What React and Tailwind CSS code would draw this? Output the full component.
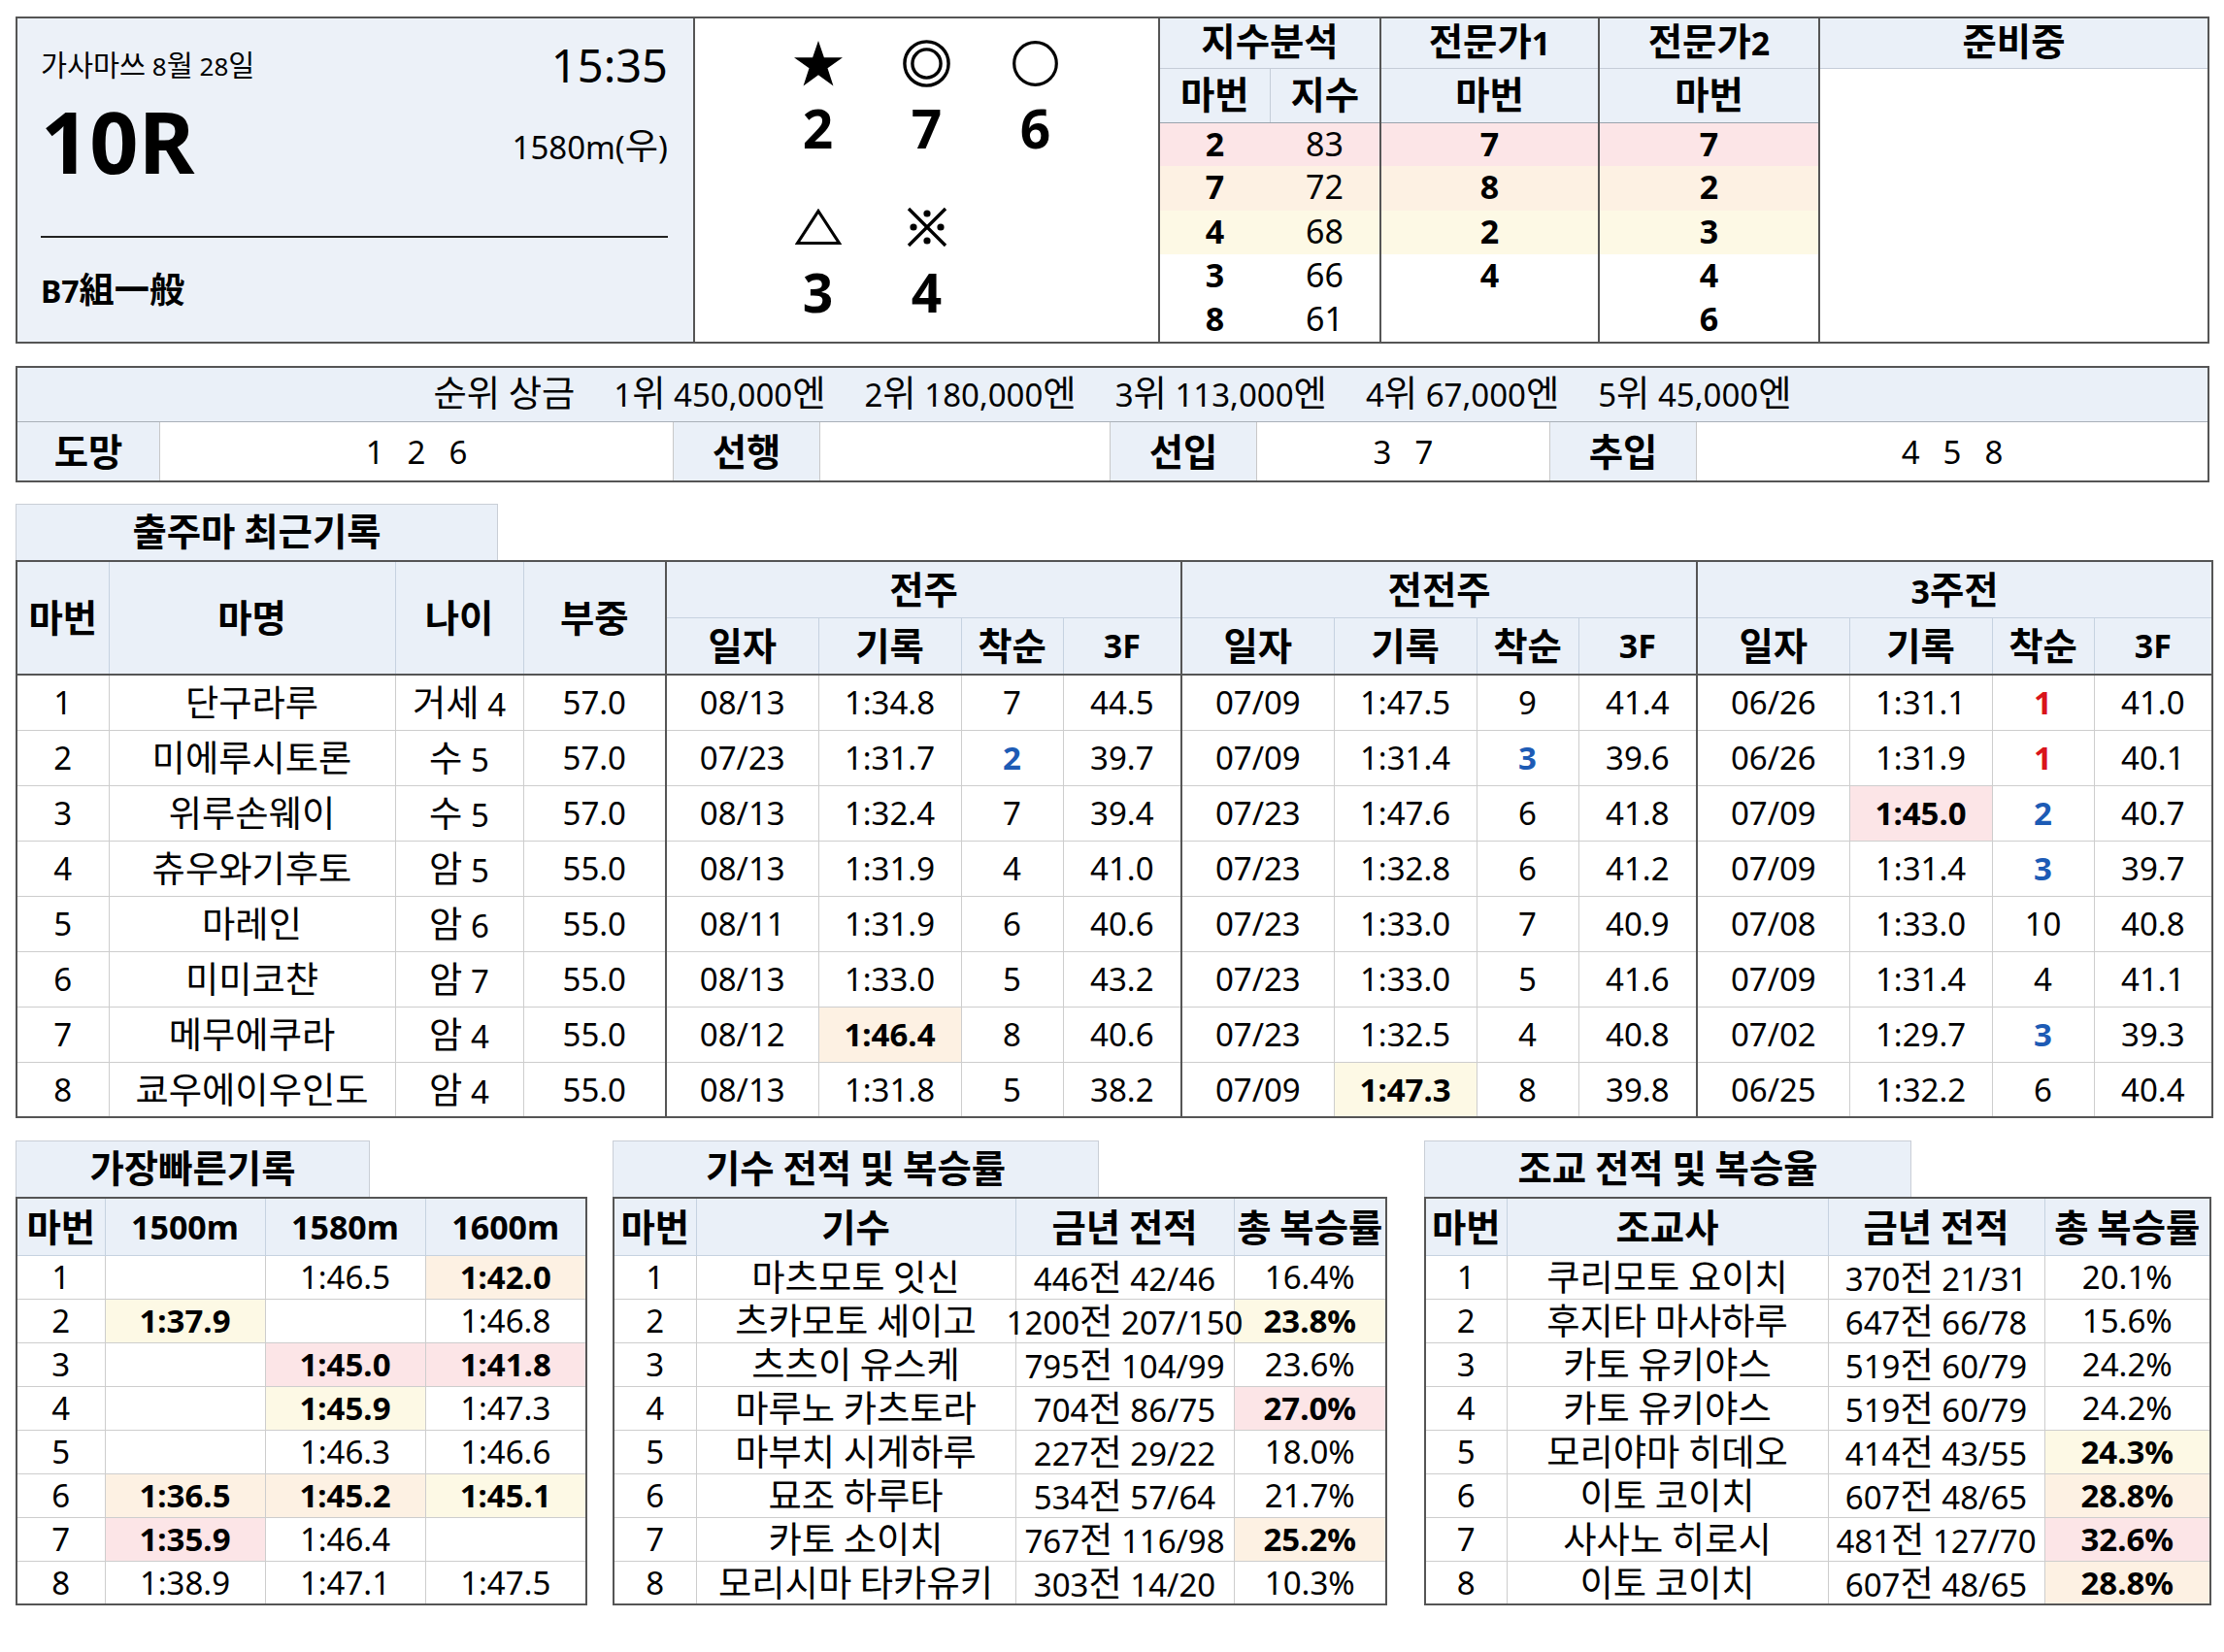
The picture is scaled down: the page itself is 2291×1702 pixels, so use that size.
import React from "react";

const FONT = "font-['Noto_Sans','Noto_Sans_CJK_KR',sans-serif]";
const HB = "bg-[#eaf0f8]";
const PINK = "bg-[#fce5e7]";
const ORANGE = "bg-[#fdf1e3]";
const YELLOW = "bg-[#fdf9e5]";
const RED = "text-[#d9141b]";
const BLUEC = "text-[#1d5bb5]";

const CJK = /([\u1100-\u11FF\u3130-\u318F\uAC00-\uD7AF\u4E00-\u9FFF]+)/;
function K({ t }) {
  if (typeof t !== "string") return t;
  return (
    <span>
      {t.split(CJK).map((p, i) =>
        i % 2 === 1 ? (
          <span key={i} className="text-[1.13em]">
            {p}
          </span>
        ) : (
          <React.Fragment key={i}>{p}</React.Fragment>
        )
      )}
    </span>
  );
}

function StarIcon() {
  return (
    <svg width="50" height="48" viewBox="0 0 100 96">
      <polygon points="50,2 61.8,36.5 100,36.5 69,58.5 80.9,95 50,72.5 19.1,95 31,58.5 0,36.5 38.2,36.5" fill="#000" />
    </svg>
  );
}
function DoubleCircle() {
  return (
    <svg width="49" height="49" viewBox="0 0 49 49">
      <circle cx="24.5" cy="24.5" r="22.6" fill="none" stroke="#000" strokeWidth="3.4" />
      <circle cx="24.5" cy="24.5" r="14.6" fill="none" stroke="#000" strokeWidth="3.4" />
    </svg>
  );
}
function CircleIcon() {
  return (
    <svg width="47" height="47" viewBox="0 0 47 47">
      <circle cx="23.5" cy="23.5" r="21.8" fill="none" stroke="#000" strokeWidth="3.2" />
    </svg>
  );
}
function TriangleIcon() {
  return (
    <svg width="48" height="38" viewBox="0 0 48 38">
      <polygon points="24,2.5 45.5,35.5 2.5,35.5" fill="none" stroke="#000" strokeWidth="3.2" strokeLinejoin="miter" />
    </svg>
  );
}
function RefMark() {
  return (
    <svg width="42" height="42" viewBox="0 0 42 42">
      <line x1="2" y1="2" x2="40" y2="40" stroke="#000" strokeWidth="3.4" />
      <line x1="40" y1="2" x2="2" y2="40" stroke="#000" strokeWidth="3.4" />
      <circle cx="21" cy="7" r="3.6" fill="#000" />
      <circle cx="21" cy="35" r="3.6" fill="#000" />
      <circle cx="7" cy="21" r="3.6" fill="#000" />
      <circle cx="35" cy="21" r="3.6" fill="#000" />
    </svg>
  );
}

function TopBox() {
  const marks = [
    { icon: <StarIcon />, n: "2" },
    { icon: <DoubleCircle />, n: "7" },
    { icon: <CircleIcon />, n: "6" },
    { icon: <TriangleIcon />, n: "3" },
    { icon: <RefMark />, n: "4" },
  ];
  const idx = [
    ["2", "83", "7", "7", PINK],
    ["7", "72", "8", "2", ORANGE],
    ["4", "68", "2", "3", YELLOW],
    ["3", "66", "4", "4", ""],
    ["8", "61", "", "6", ""],
  ];
  const hc = `${HB} text-center align-middle font-bold text-[34px] leading-none p-0`;
  const dc = "text-center align-middle text-[34px] leading-none p-0";
  return (
    <div className="flex h-[337px] w-[2260px] border-2 border-[#555]">
      <div className="flex w-[698px] flex-col border-r-2 border-[#555] bg-[#ecf1f8] pl-[24px] pr-[26px] pt-[11px]">
        <div className="flex h-[75px] items-center justify-between">
          <span className="text-[26px] leading-none"><K t="가사마쓰 8월 28일" /></span>
          <span className="text-[47px] leading-none">15:35</span>
        </div>
        <div className="flex h-[80px] items-center justify-between">
          <span className="text-[88px] font-bold leading-none">10R</span>
          <span className="mt-[10px] text-[33px] leading-none"><K t="1580m(우)" /></span>
        </div>
        <div className="h-[58px]" />
        <div className="h-[2px] bg-[#222]" />
        <div className="flex flex-1 items-center text-[32px] font-bold leading-none"><K t="B7組一般" /></div>
      </div>
      <div className="w-[479px] border-r-2 border-[#555] bg-white pt-[18px]">
        <div className="grid grid-cols-[112px_112px_112px] justify-center gap-y-[37px]">
          {marks.map((m, i) => (
            <div key={i} className="flex flex-col items-center">
              <div className="flex h-[56px] items-center justify-center">{m.icon}</div>
              <div className="flex h-[76px] items-center justify-center text-[55px] font-bold leading-none">{m.n}</div>
            </div>
          ))}
        </div>
      </div>
      <table className="h-full w-[1079px] table-fixed border-collapse bg-white">
        <colgroup>
          <col className="w-[113px]" />
          <col className="w-[114px]" />
          <col className="w-[225px]" />
          <col className="w-[227px]" />
          <col />
        </colgroup>
        <tbody>
          <tr className="h-[51px]">
            <td colSpan={2} className={`${hc} border-b border-b-[#c5cdd8] pb-[5px]`}><K t="지수분석" /></td>
            <td className={`${hc} border-b border-b-[#c5cdd8] border-l-2 border-l-[#555] pb-[5px]`}><K t="전문가1" /></td>
            <td className={`${hc} border-b border-b-[#c5cdd8] border-l-2 border-l-[#555] pb-[5px]`}><K t="전문가2" /></td>
            <td className={`${hc} border-b border-b-[#c5cdd8] border-l-2 border-l-[#555] pb-[5px]`}><K t="준비중" /></td>
          </tr>
          <tr className="h-[56px]">
            <td className={`${hc} border-b border-b-[#9aa3ad] border-r border-r-[#c5cdd8] pb-[2px]`}><K t="마번" /></td>
            <td className={`${hc} border-b border-b-[#9aa3ad] pb-[2px]`}><K t="지수" /></td>
            <td className={`${hc} border-b border-b-[#9aa3ad] border-l-2 border-l-[#555] pb-[2px]`}><K t="마번" /></td>
            <td className={`${hc} border-b border-b-[#9aa3ad] border-l-2 border-l-[#555] pb-[2px]`}><K t="마번" /></td>
            <td rowSpan={6} className="border-l-2 border-l-[#555] bg-white p-0"></td>
          </tr>
          {idx.map((r, i) => (
            <tr key={i} className="h-[45px]">
              <td className={`${dc} ${r[4]} font-bold pb-[3px]`}>{r[0]}</td>
              <td className={`${dc} ${r[4]} pb-[3px]`}>{r[1]}</td>
              <td className={`${dc} ${r[4]} font-bold border-l-2 border-l-[#555] pb-[3px]`}>{r[2]}</td>
              <td className={`${dc} ${r[4]} font-bold border-l-2 border-l-[#555] pb-[3px]`}>{r[3]}</td>
            </tr>
          ))}
        </tbody>
      </table>
    </div>
  );
}

function PrizeBox() {
  const prizes = ["순위 상금", "1위 450,000엔", "2위 180,000엔", "3위 113,000엔", "4위 67,000엔", "5위 45,000엔"];
  const lab = `${HB} flex items-center justify-center font-bold text-[34px] leading-none`;
  const val = "flex items-center justify-center gap-[24px] text-[33px] leading-none bg-white";
  return (
    <div className="mt-[23px] flex w-[2260px] flex-col border-2 border-[#555]">
      <div className={`${HB} flex h-[56px] items-center justify-center gap-[40px] border-b border-[#a9b0b8] pb-[3px] text-[33px] leading-none`}>
        {prizes.map((p) => (
          <K key={p} t={p} />
        ))}
      </div>
      <div className="flex h-[60px]">
        <div className={`${lab} w-[146px]`}><K t="도망" /></div>
        <div className={`${val} w-[530px] border-x border-[#c8c8c8]`}>
          <span>1</span><span>2</span><span>6</span>
        </div>
        <div className={`${lab} w-[150px]`}><K t="선행" /></div>
        <div className={`${val} w-[300px] border-x border-[#c8c8c8]`}></div>
        <div className={`${lab} w-[150px]`}><K t="선입" /></div>
        <div className={`${val} w-[303px] border-x border-[#c8c8c8]`}>
          <span>3</span><span>7</span>
        </div>
        <div className={`${lab} w-[150px]`}><K t="추입" /></div>
        <div className={`${val} flex-1 border-l border-[#c8c8c8]`}>
          <span>4</span><span>5</span><span>8</span>
        </div>
      </div>
    </div>
  );
}

const H = (v, bg) => ({ v, bg, b: true });
const C = (v, col) => ({ v, col, b: true });

const horses = [
  ["1", "단구라루", "거세 4", "57.0", ["08/13", "1:34.8", "7", "44.5"], ["07/09", "1:47.5", "9", "41.4"], ["06/26", "1:31.1", C("1", RED), "41.0"]],
  ["2", "미에루시토론", "수 5", "57.0", ["07/23", "1:31.7", C("2", BLUEC), "39.7"], ["07/09", "1:31.4", C("3", BLUEC), "39.6"], ["06/26", "1:31.9", C("1", RED), "40.1"]],
  ["3", "위루손웨이", "수 5", "57.0", ["08/13", "1:32.4", "7", "39.4"], ["07/23", "1:47.6", "6", "41.8"], ["07/09", H("1:45.0", PINK), C("2", BLUEC), "40.7"]],
  ["4", "츄우와기후토", "암 5", "55.0", ["08/13", "1:31.9", "4", "41.0"], ["07/23", "1:32.8", "6", "41.2"], ["07/09", "1:31.4", C("3", BLUEC), "39.7"]],
  ["5", "마레인", "암 6", "55.0", ["08/11", "1:31.9", "6", "40.6"], ["07/23", "1:33.0", "7", "40.9"], ["07/08", "1:33.0", "10", "40.8"]],
  ["6", "미미코챤", "암 7", "55.0", ["08/13", "1:33.0", "5", "43.2"], ["07/23", "1:33.0", "5", "41.6"], ["07/09", "1:31.4", "4", "41.1"]],
  ["7", "메무에쿠라", "암 4", "55.0", ["08/12", H("1:46.4", ORANGE), "8", "40.6"], ["07/23", "1:32.5", "4", "40.8"], ["07/02", "1:29.7", C("3", BLUEC), "39.3"]],
  ["8", "쿄우에이우인도", "암 4", "55.0", ["08/13", "1:31.8", "5", "38.2"], ["07/09", H("1:47.3", YELLOW), "8", "39.8"], ["06/25", "1:32.2", "6", "40.4"]],
];

function Cell({ d, extra = "" }) {
  const o = typeof d === "object" && d !== null ? d : { v: d };
  return (
    <td className={`border border-[#cdcdcd] p-0 text-center align-middle text-[33px] leading-none ${o.bg || "bg-white"} ${o.b ? "font-bold" : ""} ${o.col || ""} ${extra}`}>
      <div className="flex justify-center whitespace-nowrap">
        <K t={o.v} />
      </div>
    </td>
  );
}

function Tab({ w, children }) {
  return (
    <div className={`${HB} flex h-[58px] items-center justify-center border border-b-0 border-[#c9ced6] pb-[3px] text-[34px] font-bold leading-none ${w}`}>
      <K t={children} />
    </div>
  );
}

function MainRecords() {
  const th = `${HB} border border-[#c6d2e0] p-0 text-center align-middle text-[34px] font-bold leading-none`;
  const groups = ["전주", "전전주", "3주전"];
  return (
    <div className="mt-[22px] w-[2260px]">
      <Tab w="w-[497px]">출주마 최근기록</Tab>
      <table className="w-[2260px] table-fixed border-collapse border-2 border-[#555]">
        <colgroup>
          <col className="w-[95px]" />
          <col className="w-[295px]" />
          <col className="w-[132px]" />
          <col className="w-[147px]" />
          {[0, 1, 2].map((g) => (
            <React.Fragment key={g}>
              <col className="w-[157px]" />
              <col className="w-[147px]" />
              <col className="w-[105px]" />
              <col className="w-[122px]" />
            </React.Fragment>
          ))}
        </colgroup>
        <thead>
          <tr className="h-[58px]">
            <th rowSpan={2} className={`${th} border-b-2 border-b-[#555]`}><K t="마번" /></th>
            <th rowSpan={2} className={`${th} border-b-2 border-b-[#555]`}><K t="마명" /></th>
            <th rowSpan={2} className={`${th} border-b-2 border-b-[#555]`}><K t="나이" /></th>
            <th rowSpan={2} className={`${th} border-b-2 border-b-[#555]`}><K t="부중" /></th>
            {groups.map((g) => (
              <th key={g} colSpan={4} className={`${th} border-l-2 border-l-[#555]`}><K t={g} /></th>
            ))}
          </tr>
          <tr className="h-[59px]">
            {groups.map((g) => (
              <React.Fragment key={g}>
                <th className={`${th} border-b-2 border-b-[#555] border-l-2 border-l-[#555]`}><K t="일자" /></th>
                <th className={`${th} border-b-2 border-b-[#555]`}><K t="기록" /></th>
                <th className={`${th} border-b-2 border-b-[#555]`}><K t="착순" /></th>
                <th className={`${th} border-b-2 border-b-[#555]`}>3F</th>
              </React.Fragment>
            ))}
          </tr>
        </thead>
        <tbody>
          {horses.map((h) => (
            <tr key={h[0]} className="h-[57px]">
              <Cell d={h[0]} />
              <Cell d={h[1]} />
              <Cell d={h[2]} />
              <Cell d={h[3]} />
              {[h[4], h[5], h[6]].map((g, gi) => (
                <React.Fragment key={gi}>
                  <Cell d={g[0]} extra="border-l-2 border-l-[#555]" />
                  <Cell d={g[1]} />
                  <Cell d={g[2]} />
                  <Cell d={g[3]} />
                </React.Fragment>
              ))}
            </tr>
          ))}
        </tbody>
      </table>
    </div>
  );
}

function SmallTable({ title, tabW, width, cols, headers, rows }) {
  const th = `${HB} border border-[#c6d2e0] p-0 text-center align-middle text-[34px] font-bold leading-none whitespace-nowrap`;
  return (
    <div className={width}>
      <Tab w={tabW}>{title}</Tab>
      <table className="w-full table-fixed border-collapse border-2 border-[#555]">
        <colgroup>
          {cols.map((c, i) => (
            <col key={i} className={c} />
          ))}
        </colgroup>
        <thead>
          <tr className="h-[59px]">
            {headers.map((h) => (
              <th key={h} className={th}><K t={h} /></th>
            ))}
          </tr>
        </thead>
        <tbody>
          {rows.map((r, i) => (
            <tr key={i} className="h-[45px]">
              {r.map((c, j) => (
                <Cell key={j} d={c} />
              ))}
            </tr>
          ))}
        </tbody>
      </table>
    </div>
  );
}

function BottomTables() {
  const fast = [
    ["1", "", "1:46.5", H("1:42.0", ORANGE)],
    ["2", H("1:37.9", YELLOW), "", "1:46.8"],
    ["3", "", H("1:45.0", PINK), H("1:41.8", PINK)],
    ["4", "", H("1:45.9", YELLOW), "1:47.3"],
    ["5", "", "1:46.3", "1:46.6"],
    ["6", H("1:36.5", ORANGE), H("1:45.2", ORANGE), H("1:45.1", YELLOW)],
    ["7", H("1:35.9", PINK), "1:46.4", ""],
    ["8", "1:38.9", "1:47.1", "1:47.5"],
  ];
  const jockeys = [
    ["1", "마츠모토 잇신", "446전 42/46", "16.4%"],
    ["2", "츠카모토 세이고", "1200전 207/150", H("23.8%", YELLOW)],
    ["3", "츠츠이 유스케", "795전 104/99", "23.6%"],
    ["4", "마루노 카츠토라", "704전 86/75", H("27.0%", PINK)],
    ["5", "마부치 시게하루", "227전 29/22", "18.0%"],
    ["6", "묘조 하루타", "534전 57/64", "21.7%"],
    ["7", "카토 소이치", "767전 116/98", H("25.2%", ORANGE)],
    ["8", "모리시마 타카유키", "303전 14/20", "10.3%"],
  ];
  const trainers = [
    ["1", "쿠리모토 요이치", "370전 21/31", "20.1%"],
    ["2", "후지타 마사하루", "647전 66/78", "15.6%"],
    ["3", "카토 유키야스", "519전 60/79", "24.2%"],
    ["4", "카토 유키야스", "519전 60/79", "24.2%"],
    ["5", "모리야마 히데오", "414전 43/55", H("24.3%", YELLOW)],
    ["6", "이토 코이치", "607전 48/65", H("28.8%", ORANGE)],
    ["7", "사사노 히로시", "481전 127/70", H("32.6%", PINK)],
    ["8", "이토 코이치", "607전 48/65", H("28.8%", ORANGE)],
  ];
  return (
    <div className="mt-[23px] flex w-[2260px] items-start">
      <SmallTable
        title="가장빠른기록"
        tabW="w-[365px]"
        width="w-[587px]"
        cols={["w-[91px]", "w-[165px]", "w-[165px]", "w-[166px]"]}
        headers={["마번", "1500m", "1580m", "1600m"]}
        rows={fast}
      />
      <div className="w-[28px] shrink-0" />
      <SmallTable
        title="기수 전적 및 복승률"
        tabW="w-[501px]"
        width="w-[796px]"
        cols={["w-[85px]", "w-[329px]", "w-[225px]", "w-[157px]"]}
        headers={["마번", "기수", "금년 전적", "총 복승률"]}
        rows={jockeys}
      />
      <div className="w-[40px] shrink-0" />
      <SmallTable
        title="조교 전적 및 복승율"
        tabW="w-[502px]"
        width="w-[809px]"
        cols={["w-[84px]", "w-[331px]", "w-[223px]", "w-[171px]"]}
        headers={["마번", "조교사", "금년 전적", "총 복승률"]}
        rows={trainers}
      />
    </div>
  );
}

export default function App() {
  return (
    <div className={`${FONT} min-h-[1702px] w-[2291px] bg-white pl-[16px] pt-[17px] text-black`}>
      <TopBox />
      <PrizeBox />
      <MainRecords />
      <BottomTables />
    </div>
  );
}
